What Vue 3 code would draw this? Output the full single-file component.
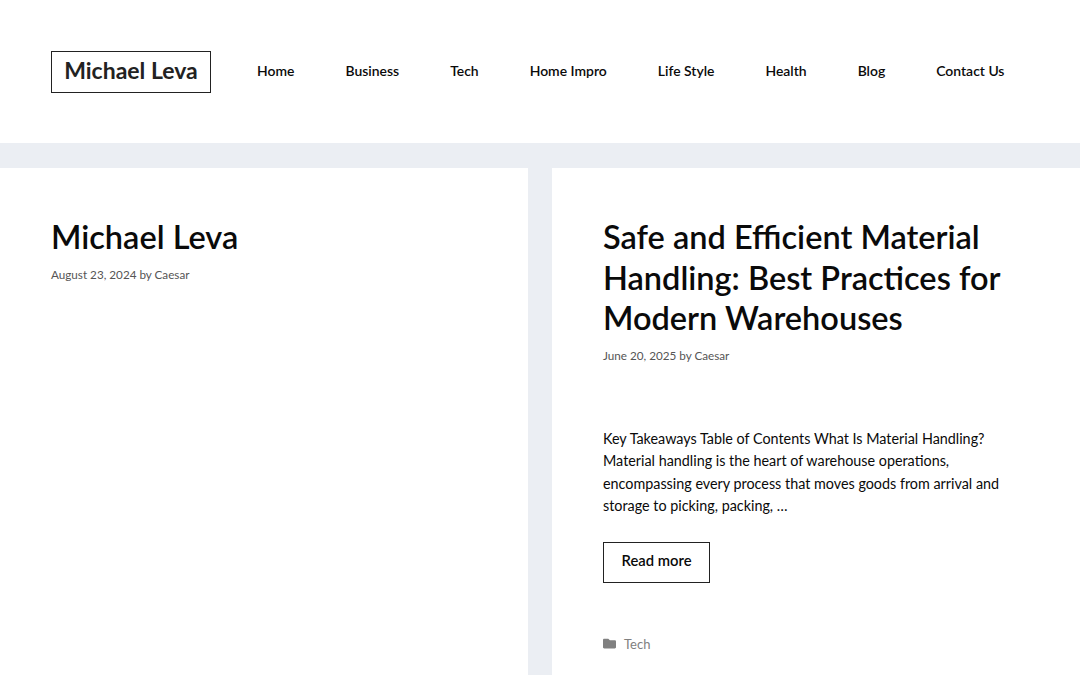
<script setup>
const navItems = ['Home', 'Business', 'Tech', 'Home Impro', 'Life Style', 'Health', 'Blog', 'Contact Us']
</script>

<template>
  <div class="page">
    <header class="site-header">
      <a class="logo">Michael Leva</a>
      <nav class="main-nav">
        <a v-for="item in navItems" :key="item">{{ item }}</a>
      </nav>
    </header>

    <main class="posts">
      <article class="post">
        <h2>Michael Leva</h2>
        <p class="meta">August 23, 2024 by Caesar</p>
      </article>

      <article class="post">
        <h2>Safe and Efficient Material Handling: Best Practices for Modern Warehouses</h2>
        <p class="meta">June 20, 2025 by Caesar</p>
        <p class="excerpt">
          Key Takeaways Table of Contents What Is Material Handling? Material handling is the heart
          of warehouse operations, encompassing every process that moves goods from arrival and
          storage to picking, packing, …
        </p>
        <a class="read-more">Read more</a>
        <div class="cats">
          <svg viewBox="0 0 512 512" width="13" height="13">
            <path fill="currentColor" d="M464 128H272l-64-64H48C21.5 64 0 85.5 0 112v288c0 26.5 21.5 48 48 48h416c26.5 0 48-21.5 48-48V176c0-26.500-21.500-48-48-48z" />
          </svg>
          <span>Tech</span>
        </div>
      </article>
    </main>
  </div>
</template>

<style>
html,
body {
  margin: 0;
  background: #ebeef3;
}
</style>

<style scoped>
.page {
  height: 675px;
  overflow: hidden;
  font-family: Lato, 'Noto Sans', sans-serif;
  color: #0a0a0a;
}

/* HEADER ----------------------------- */
.site-header {
  display: flex;
  align-items: center;
  height: 143px;
  padding: 0 51px;
  box-sizing: border-box;
  background: #fff;
}

.logo {
  flex-shrink: 0;
  box-sizing: border-box;
  width: 160px;
  height: 42px;
  line-height: 36px;
  text-align: center;
  white-space: nowrap;
  border: 1px solid #222;
  font-size: 23px;
  font-weight: 700;
  color: #222;
}

.main-nav {
  display: flex;
  margin: 0 0 2px 20.5px;
}

.main-nav a {
  padding: 0 25.5px;
  font-size: 13.95px;
  font-weight: 600;
  line-height: 58px;
  white-space: nowrap;
}

/* POSTS ----------------------------- */
.posts {
  display: grid;
  grid-template-columns: 528px 528px;
  gap: 24px;
  margin-top: 25px;
}

.post {
  height: 507px;
  padding: 49px 51px 0;
  box-sizing: border-box;
  background: #fff;
}

.post h2 {
  margin: 0;
  font-size: 32.5px;
  font-weight: 600;
  line-height: 40.5px;
}

.meta {
  margin: 6px 0 0;
  font-size: 11.7px;
  line-height: 20px;
  color: #555;
}

.excerpt {
  margin: 63px 0 0;
  font-size: 14.35px;
  line-height: 22.6px;
}

.read-more {
  display: block;
  box-sizing: border-box;
  width: 107px;
  height: 41px;
  margin-top: 24px;
  line-height: 35px;
  text-align: center;
  border: 1px solid #222;
  font-size: 14.8px;
  font-weight: 600;
}

.cats {
  display: flex;
  align-items: center;
  gap: 8px;
  margin-top: 53px;
  font-size: 13px;
  color: #808080;
}
</style>
